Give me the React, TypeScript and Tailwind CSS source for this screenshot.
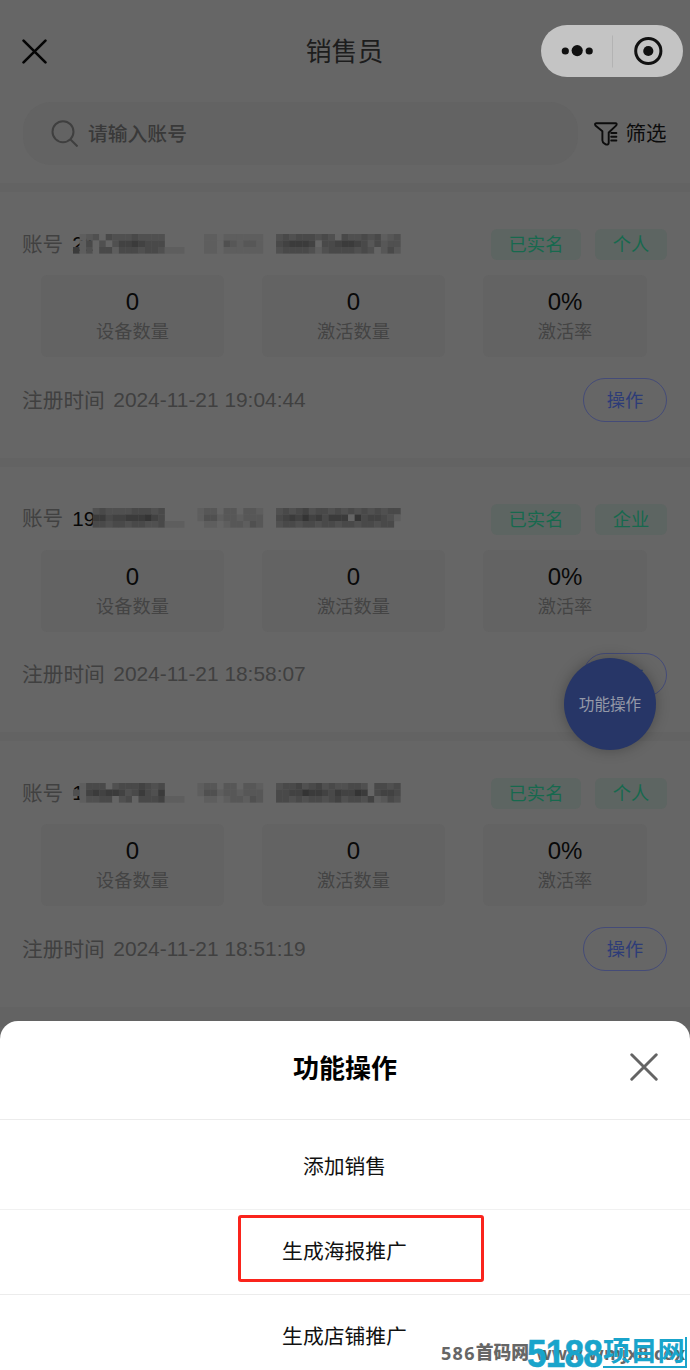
type Seller = {
  account: string;
  kind: string;
  time: string;
  mask: string[];
};

// "." leaves a cell empty, a digit is how dark the cell is
const sellers: Seller[] = [
  {
    account: "21",
    kind: "个人",
    time: "2024-11-21 19:04:44",
    mask: [
      ".1230433343333..." + ".." + ".110111111" + ".." + "3434443430433434123",
      ".1403035565444..." + ".." + ".110321221" + ".." + "4566650445665424233",
      "61304414443443111" + ".." + ".110111111" + ".." + "3444431344443430242",
    ],
  },
  {
    account: "19",
    kind: "企业",
    time: "2024-11-21 18:58:07",
    mask: [
      "...34333344434..." + ".." + "1220220221" + ".." + "3434534434343434344",
      "...66455666754..." + ".." + "1331221222" + ".." + "4565756466607455431",
      "...44344344334111" + ".." + ".110122132" + ".." + "344344344344344344.",
    ],
  },
  {
    account: "1",
    kind: "个人",
    time: "2024-11-21 18:51:19",
    mask: [
      ".1444034445434..." + ".." + "1220220221" + ".." + "3445345343344304434",
      "31565665346436..." + ".." + "1331221222" + ".." + "4455766546557604554",
      ".1334403404445111" + ".." + ".110122132" + ".." + "4434344345344351243",
    ],
  },
];

function Mosaic({ rows }: { rows: string[] }) {
  return (
    <svg className="absolute left-[50px] top-[4.5px]" width="330" height="21" viewBox="0 0 330 21">
      {rows.map((row, y) =>
        row.split("").map((c, x) => {
          if (c === ".") return null;
          const v = 101 - Number(c) * 7;
          return (
            <rect
              key={`${x}-${y}`}
              x={x * 6.55}
              y={y * 6.5}
              width="6.7"
              height="6.6"
              fill={`rgb(${v},${v},${v})`}
            />
          );
        })
      )}
    </svg>
  );
}

function Stat({ value, label, className }: { value: string; label: string; className: string }) {
  return (
    <div className={`h-[82px] rounded-md bg-[#636363] pt-[14px] text-center ${className}`}>
      <div className="text-[24px] leading-[26px] text-[#090909]">{value}</div>
      <div className="text-[18.2px] leading-[34px] text-[#444444]">{label}</div>
    </div>
  );
}

function Tag({ children, className }: { children: string; className: string }) {
  return (
    <div
      className={`h-[31px] rounded-md bg-[#5d6562] text-center text-[18.3px] leading-[31px] text-[#17694e] ${className}`}
    >
      {children}
    </div>
  );
}

function SellerCard({ seller }: { seller: Seller }) {
  return (
    <section className="h-[274.5px] border-t-[9px] border-[#636363] pt-[37px]">
      <div className="relative ml-[23px] mr-[23px] flex h-[31px] items-center">
        <span className="-ml-px pt-[1px] text-[20.6px] text-[#414141]">账号</span>
        <span className="ml-[9px] text-[20.6px] text-[#080808]">{seller.account}</span>
        <Mosaic rows={seller.mask} />
        <Tag className="ml-auto w-[90px]">已实名</Tag>
        <Tag className="ml-[14px] w-[72px]">{seller.kind}</Tag>
      </div>

      <div className="mt-[15px] flex pl-[41px]">
        <Stat value="0" label="设备数量" className="w-[183px]" />
        <Stat value="0" label="激活数量" className="ml-[38px] w-[183px]" />
        <Stat value="0%" label="激活率" className="ml-[38px] w-[164px]" />
      </div>

      <div className="mt-[21px] flex h-[44px] items-center justify-between pl-[22px] pr-[23px]">
        <div className="flex gap-[8.5px] text-[#404040]">
          <span className="pt-[1px] text-[20.7px]">注册时间</span>
          <span className="text-[20.9px] leading-[32px]">{seller.time}</span>
        </div>
        <div className="h-[44px] w-[84px] rounded-full border border-[#444b78] text-center text-[18.2px] leading-[44px] text-[#2d3c78]">
          操作
        </div>
      </div>
    </section>
  );
}

function CloseIcon({ className }: { className: string }) {
  return (
    <svg className={className} viewBox="0 0 24 24" fill="none" stroke="currentColor" strokeWidth="2.5" strokeLinecap="round">
      <path d="M1.5 1.5l21 21M22.5 1.5l-21 21" />
    </svg>
  );
}

function Capsule() {
  return (
    <svg className="ml-auto mr-[7px] h-[52px] w-[142px]" viewBox="0 0 142 52">
      <rect width="142" height="52" rx="26" fill="#c4c4c4" />
      <circle cx="24.3" cy="26" r="3.6" fill="#111" />
      <circle cx="36.2" cy="25.6" r="5.6" fill="#111" />
      <circle cx="48.2" cy="26" r="3.6" fill="#111" />
      <path d="M71.5 10.5v32" stroke="#b3b3b3" />
      <circle cx="107.3" cy="26" r="12.6" fill="none" stroke="#111" strokeWidth="3" />
      <circle cx="107.3" cy="26" r="5.1" fill="#111" />
    </svg>
  );
}

function ActionSheet() {
  return (
    <div className="absolute inset-x-0 top-[1021px] h-[349px] overflow-hidden rounded-t-[18px] bg-white text-center text-[#111111]">
      <div className="relative h-[99px] border-b border-[#ececec] text-[26px] font-bold leading-[96px] text-black">
        功能操作
        <CloseIcon className="absolute right-[32px] top-[32px] h-[28px] w-[28px] text-[#646464]" />
      </div>
      <div className="h-[90px] border-b border-[#f1f1f1] pr-[1px] text-[20.8px] leading-[94px]">添加销售</div>
      <div className="relative h-[85px] border-b border-[#ececec] pr-[1px] text-[20.8px] leading-[84px]">
        生成海报推广
        <div className="absolute left-[238px] top-[5px] h-[67px] w-[246px] rounded-[3px] border-[3px] border-[#fa241c]" />
      </div>
      <div className="h-[75px] pr-[1px] text-[20.8px] leading-[84px]">生成店铺推广</div>
    </div>
  );
}

function Watermark() {
  return (
    <>
      <div className="absolute left-[441px] top-[1341px] flex whitespace-nowrap font-bold leading-[24px] text-[#666666]">
        <span className="font-['Open_Sans','Noto_Sans_CJK_SC',sans-serif] text-[18px] tracking-[1.3px]">586</span>
        <span className="text-[17.8px] font-black">首码网</span>
        <span className="ml-[7px] font-['Open_Sans',sans-serif] text-[18px] tracking-[0.2px]">www.wmjx8.cox</span>
      </div>
      <div className="absolute left-[527px] top-[1337px] flex h-[32px] text-[#19a4cb]">
        <span className="w-[76px] origin-left scale-x-[0.93] font-['Liberation_Sans',sans-serif] text-[38px] font-bold leading-[34px] tracking-[-1px] [-webkit-text-stroke:0.5px_#19a4cb]">
          5188
        </span>
        <span className="h-[31px] w-[84px] whitespace-nowrap border-b-2 border-r-2 border-[#19a4cb] text-[27.3px] font-bold leading-[30px]">
          项目网
        </span>
      </div>
    </>
  );
}

export default function App() {
  return (
    <main className="relative h-[1370px] w-[690px] overflow-hidden bg-[#666666] font-['Liberation_Sans','Noto_Sans_CJK_SC',sans-serif]">
      <header className="relative flex h-[102px] items-center">
        <CloseIcon className="ml-[22px] h-[25px] w-[25px] text-[#050505]" />
        <h1 className="absolute inset-x-0 pr-[1px] pt-[2px] text-center text-[25.8px] text-[#1d1d1d]">销售员</h1>
        <Capsule />
      </header>

      <div className="flex h-[81px] items-start pl-[23px]">
        <div className="flex h-[63px] w-[555px] items-center rounded-[28px] bg-[#636363] pl-[28px]">
          <svg className="h-[27px] w-[27px]" viewBox="0 0 27 27" fill="none" stroke="#3f3f3f" strokeWidth="2">
            <circle cx="12" cy="11.7" r="10.5" />
            <path d="M19.5 19.5l7 7" />
          </svg>
          <span className="ml-[10px] pt-[2px] text-[19.8px] font-medium text-[#393939]">请输入账号</span>
        </div>
        <div className="ml-[16px] flex h-[63px] items-center">
          <svg
            className="h-[24px] w-[24px]"
            viewBox="0 0 24 24"
            fill="none"
            stroke="#0c0c0c"
            strokeWidth="1.9"
            strokeLinejoin="round"
            strokeLinecap="round"
          >
            <path d="M15.3 10L22.3 3.4Q23.4 1.2 21.4 1.2H2.2Q.4 1.4 1.4 3.4L8.4 9.2V18.5Q8.5 20.5 10.5 21.6L12.3 22.6Q14.6 23 14.7 20.6V10.5" />
            <path d="M17.2 11H22.4M17.2 14.8H22.4M17.2 18.5H22.4" />
          </svg>
          <span className="ml-[7.5px] pt-[2px] text-[20.5px] text-[#0c0c0c]">筛选</span>
        </div>
      </div>

      {sellers.map((seller) => (
        <SellerCard key={seller.time} seller={seller} />
      ))}
      <div className="h-[20px] bg-[#636363]" />

      <div className="absolute left-[564px] top-[658px] h-[92px] w-[92px] rounded-full bg-[#273667] text-center text-[15.6px] leading-[94px] text-[#9499a8] shadow-[0_0_14px_rgba(0,0,0,0.28)]">
        功能操作
      </div>

      <ActionSheet />
      <Watermark />
    </main>
  );
}
